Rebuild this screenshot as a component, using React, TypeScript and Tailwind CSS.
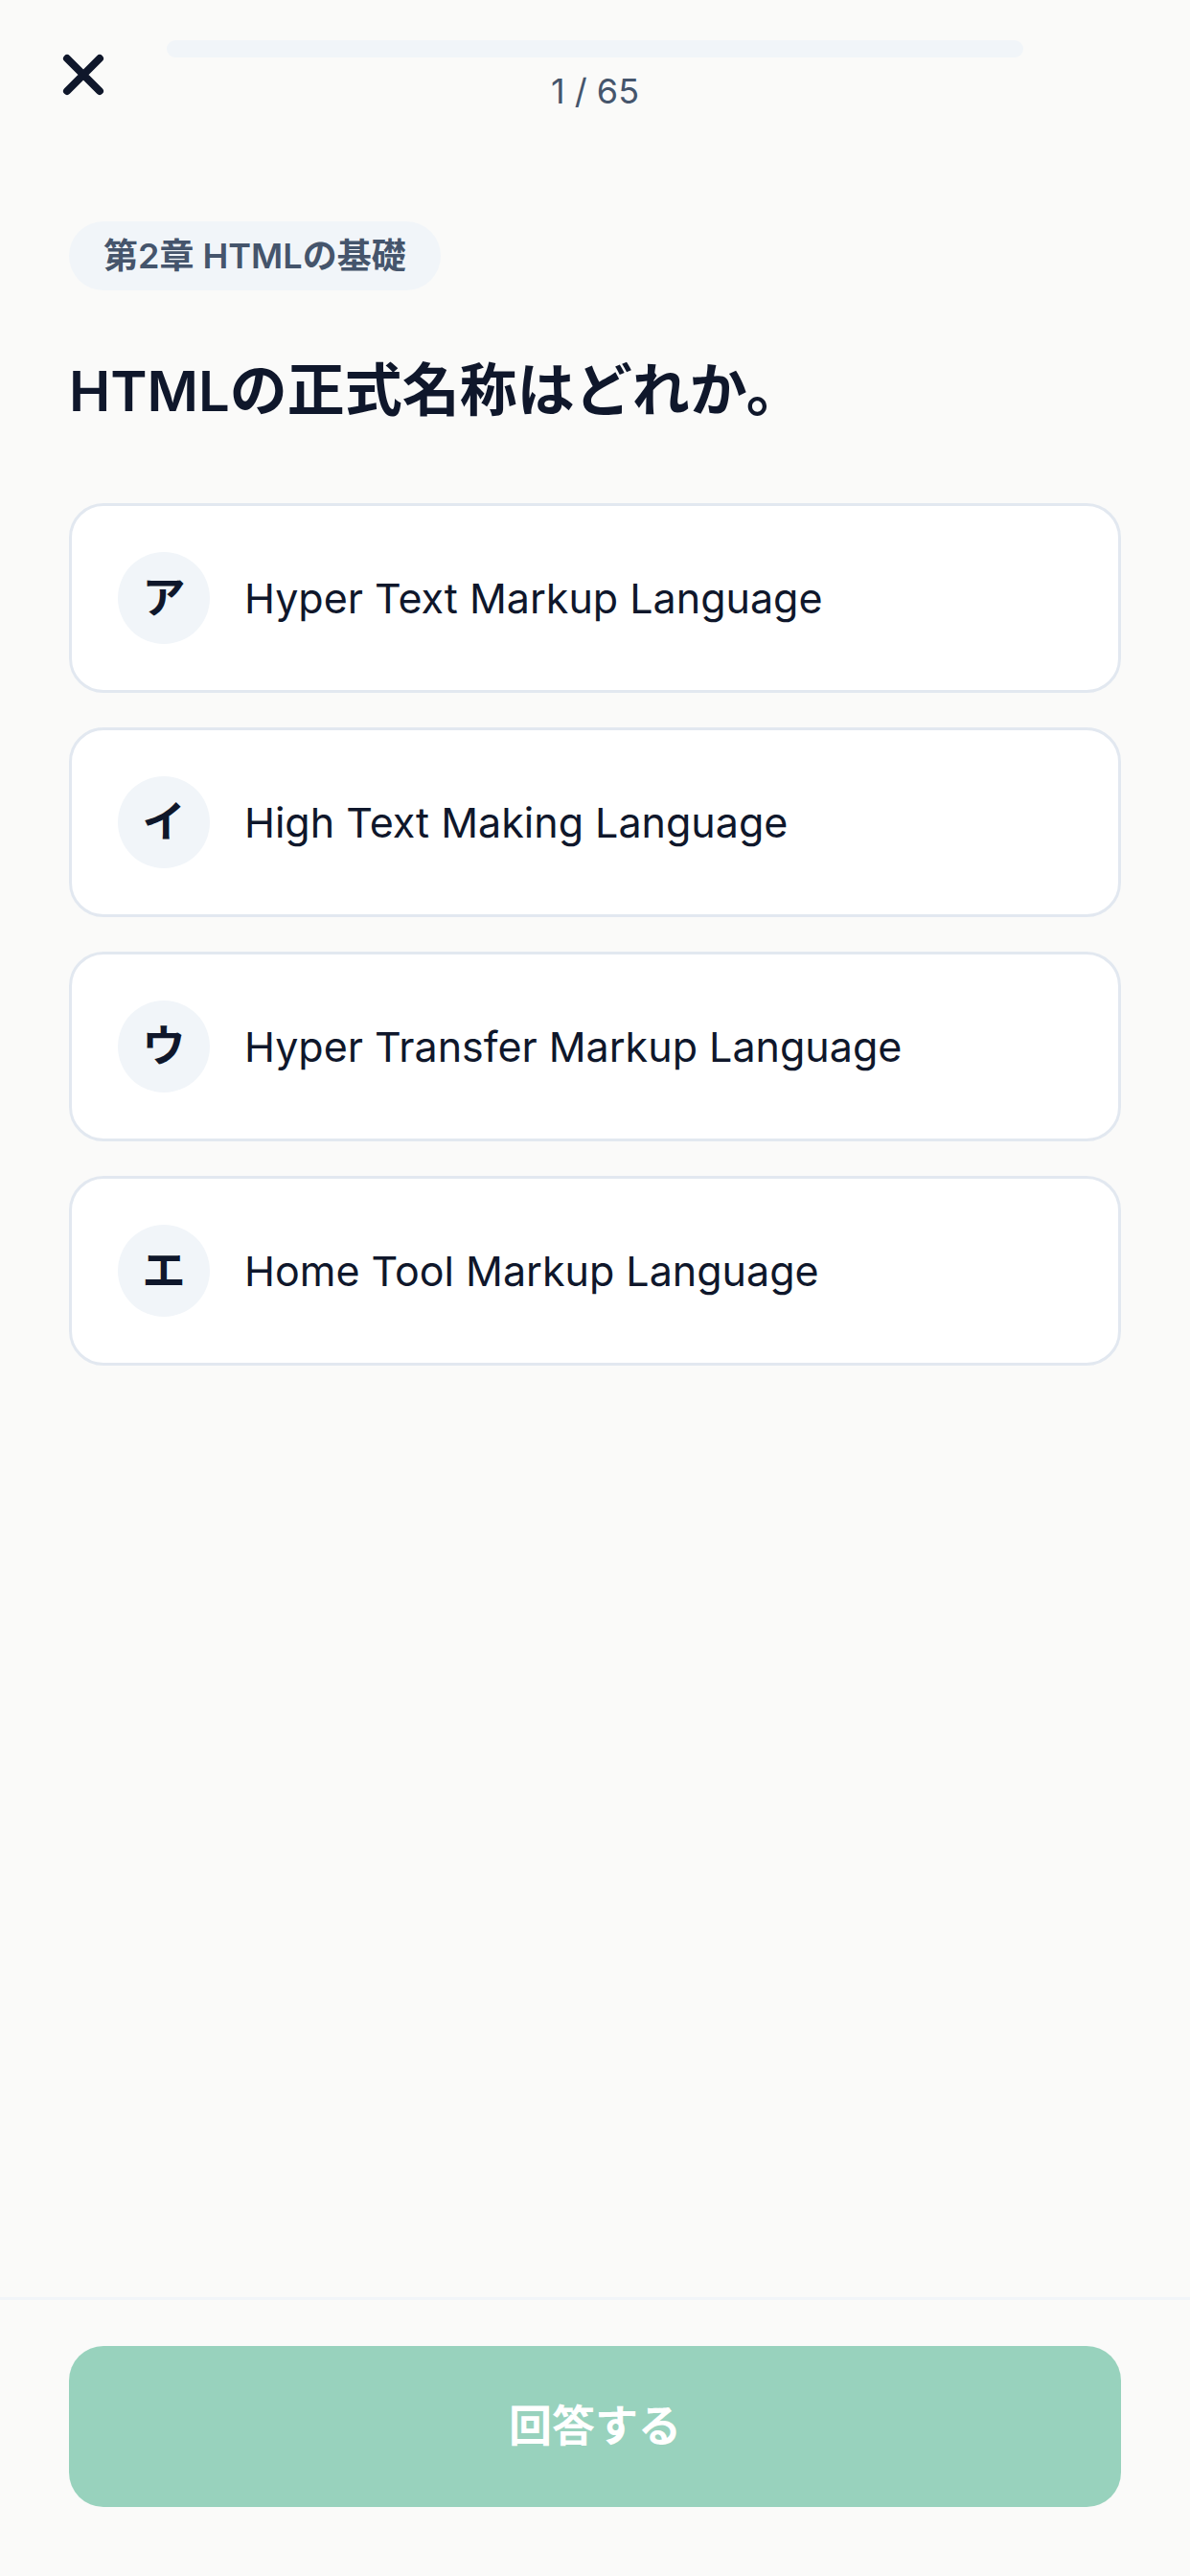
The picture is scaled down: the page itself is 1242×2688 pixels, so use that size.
const choices = [
  { mark: "ア", text: "Hyper Text Markup Language" },
  { mark: "イ", text: "High Text Making Language" },
  { mark: "ウ", text: "Hyper Transfer Markup Language" },
  { mark: "エ", text: "Home Tool Markup Language" },
];

export default function App() {
  return (
    <div className="flex min-h-screen flex-col bg-[#fafaf9] font-['Inter','Noto_Sans_CJK_JP',sans-serif] text-slate-900">
      <header className="flex items-start px-[60px] pt-[42px]">
        <button type="button" aria-label="閉じる" className="mt-[9px] flex h-[54px] w-[54px] shrink-0 items-center justify-center">
          <svg viewBox="0 0 54 54" className="h-[54px] w-[54px]" fill="none" stroke="currentColor" strokeWidth="8" strokeLinecap="round" aria-hidden="true">
            <path d="M10 10L44 44M44 10L10 44" />
          </svg>
        </button>
        <div className="ml-[60px] mr-[114px] flex flex-1 flex-col items-center gap-[15px]">
          <div role="progressbar" aria-label="進捗" aria-valuenow={1} aria-valuemax={65} className="h-[18px] w-full rounded-full bg-slate-100" />
          <p className="text-4xl text-slate-600">1 / 65</p>
        </div>
      </header>
      <main className="flex flex-1 flex-col px-[72px] pt-[116px]">
        <span className="flex h-[72px] items-center self-start rounded-full bg-slate-100 px-9 text-[36px] font-semibold text-slate-600">第2章 HTMLの基礎</span>
        <h1 className="mt-[62px] text-[60px] font-semibold leading-[84px]"><span className="text-[58px] leading-none">HTML</span>の正式名称はどれか。</h1>
        <div className="mt-[76px] flex flex-col gap-9">
          {choices.map((c) => (
            <button key={c.mark} type="button" className="flex h-[198px] items-center gap-9 rounded-[36px] border-[3px] border-slate-200 bg-white px-12 text-left">
              <span className="flex h-24 w-24 shrink-0 items-center justify-center rounded-full bg-slate-100 text-[45px] font-bold">{c.mark}</span>
              <span className="text-[43px] leading-[60px]">{c.text}</span>
            </button>
          ))}
        </div>
      </main>
      <footer className="border-t-[3px] border-slate-100 px-[72px] pb-[72px] pt-12">
        <button type="button" disabled className="h-[168px] w-full rounded-[36px] bg-[#98d2bd] text-[45px] font-bold text-white">回答する</button>
      </footer>
    </div>
  );
}
